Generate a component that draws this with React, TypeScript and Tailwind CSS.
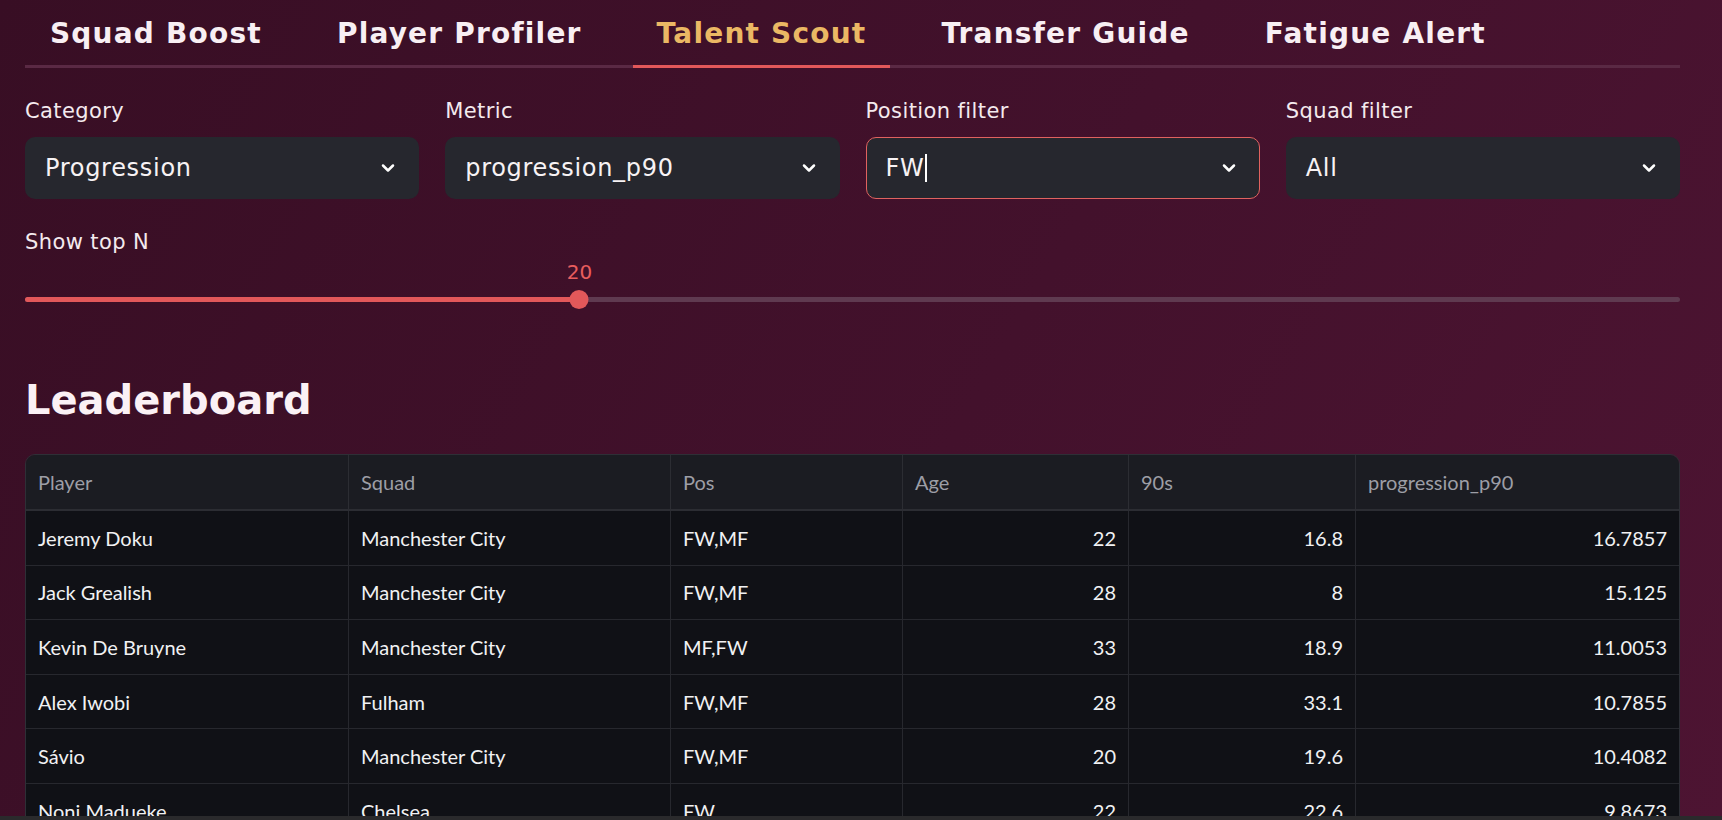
import { ChevronDown } from 'lucide-react';

const tabs = ['Squad Boost', 'Player Profiler', 'Talent Scout', 'Transfer Guide', 'Fatigue Alert'];

const filters = [
  { label: 'Category', value: 'Progression' },
  { label: 'Metric', value: 'progression_p90' },
  { label: 'Position filter', value: 'FW', focused: true },
  { label: 'Squad filter', value: 'All' },
];

const columns = [
  { key: 'player', title: 'Player', width: 'w-[322px]', num: false },
  { key: 'squad', title: 'Squad', width: 'w-[322px]', num: false },
  { key: 'pos', title: 'Pos', width: 'w-[232px]', num: false },
  { key: 'age', title: 'Age', width: 'w-[226px]', num: true },
  { key: 'nineties', title: '90s', width: 'w-[227px]', num: true },
  { key: 'metric', title: 'progression_p90', width: 'flex-1', num: true },
];

const rows = [
  { player: 'Jeremy Doku', squad: 'Manchester City', pos: 'FW,MF', age: '22', nineties: '16.8', metric: '16.7857' },
  { player: 'Jack Grealish', squad: 'Manchester City', pos: 'FW,MF', age: '28', nineties: '8', metric: '15.125' },
  { player: 'Kevin De Bruyne', squad: 'Manchester City', pos: 'MF,FW', age: '33', nineties: '18.9', metric: '11.0053' },
  { player: 'Alex Iwobi', squad: 'Fulham', pos: 'FW,MF', age: '28', nineties: '33.1', metric: '10.7855' },
  { player: 'Sávio', squad: 'Manchester City', pos: 'FW,MF', age: '20', nineties: '19.6', metric: '10.4082' },
  { player: 'Noni Madueke', squad: 'Chelsea', pos: 'FW', age: '22', nineties: '22.6', metric: '9.8673' },
];

const display = "font-['DejaVu_Sans',sans-serif]";
const tableFont = "font-['Lato',sans-serif]";

function Select({ value, focused }: { value: string; focused?: boolean }) {
  return (
    <div
      className={`flex h-[62px] items-center justify-between rounded-[10px] bg-[#26272e] pl-[19px] pr-[20px] ${
        focused ? 'border border-[#e0625f]' : 'border border-transparent'
      }`}
    >
      <div className="flex items-center text-[24px] tracking-[0.7px] text-[#f7f2f4]">
        <span>{value}</span>
        {focused && <span className="ml-[1px] h-[28px] w-[2px] bg-white" />}
      </div>
      <ChevronDown size={20} strokeWidth={3} className="text-white" />
    </div>
  );
}

export default function App() {
  const pct = 33.5;

  return (
    <div className="flex h-[820px] w-full flex-col overflow-hidden bg-[linear-gradient(120deg,#380e24_0%,#43112c_55%,#4d1432_100%)]">
      <div className={`flex-1 overflow-hidden pl-[25px] pr-[42px] ${display}`}>
        {/* tabs */}
        <div className="flex border-b-[3px] border-[#5a2944]">
          {tabs.map((t) => {
            const active = t === 'Talent Scout';
            return (
              <div
                key={t}
                className={`relative mr-[27px] flex h-[65px] items-center px-[24px] pt-[3px] text-[28px] font-bold tracking-[1.2px] first:pl-[25px] ${
                  active ? 'text-[#ebb864]' : 'text-[#f8eff3]'
                }`}
              >
                {t}
                {active && <div className="absolute -bottom-[3px] left-0 right-0 h-[3px] bg-[#e2585a]" />}
              </div>
            );
          })}
        </div>

        {/* filters */}
        <div className="mt-[31px] grid grid-cols-4 gap-[26px]">
          {filters.map((f) => (
            <div key={f.label} className="flex flex-col">
              <div className="h-[24px] text-[21px] leading-[24px] tracking-[0.4px] text-[#f4eaee]">{f.label}</div>
              <div className="mt-[14px]">
                <Select value={f.value} focused={f.focused} />
              </div>
            </div>
          ))}
        </div>

        {/* slider */}
        <div className="mt-[31px]">
          <div className="h-[24px] text-[21px] leading-[24px] tracking-[0.4px] text-[#f4eaee]">Show top N</div>
          <div className="relative mt-[8px] h-[48px]">
            <div
              className="absolute top-0 -translate-x-1/2 text-[20px] leading-[20px] text-[#e85d5d]"
              style={{ left: `${pct}%` }}
            >
              20
            </div>
            <div className="absolute left-0 right-0 top-[35px] h-[5px] rounded-full bg-[#5f3a50]" />
            <div className="absolute left-0 top-[35px] h-[5px] rounded-full bg-[#e2585a]" style={{ width: `${pct}%` }} />
            <div
              className="absolute top-[28px] h-[19px] w-[19px] -translate-x-1/2 rounded-full bg-[#e2585a]"
              style={{ left: `${pct}%` }}
            />
          </div>
        </div>

        {/* leaderboard */}
        <h2 className="mt-[65px] text-[40px] leading-[50px] font-bold text-[#fbf1f5]">Leaderboard</h2>

        <div className={`mt-[29px] overflow-hidden rounded-t-[10px] border border-[#2e2f36] ${tableFont}`}>
          <div className="flex h-[56px] border-b-2 border-[#2c2d33] bg-[#1b1c22]">
            {columns.map((c, i) => (
              <div
                key={c.key}
                className={`flex items-center px-[12px] text-[20px] text-[#9d9ea6] ${c.width} ${
                  i > 0 ? 'border-l border-[#2c2d33]' : ''
                }`}
              >
                {c.title}
              </div>
            ))}
          </div>
          {rows.map((r) => (
            <div key={r.player} className="flex h-[54.6px] border-b border-[#27282e] bg-[#101116]">
              {columns.map((c, i) => (
                <div
                  key={c.key}
                  className={`flex items-center px-[12px] text-[20px] text-[#f1f1f3] ${c.width} ${
                    c.num ? 'justify-end' : ''
                  } ${i > 0 ? 'border-l border-[#27282e]' : ''}`}
                >
                  {r[c.key as keyof typeof r]}
                </div>
              ))}
            </div>
          ))}
        </div>
      </div>
      <div className="h-[4px] shrink-0 bg-[#2a2a2c]" />
    </div>
  );
}
